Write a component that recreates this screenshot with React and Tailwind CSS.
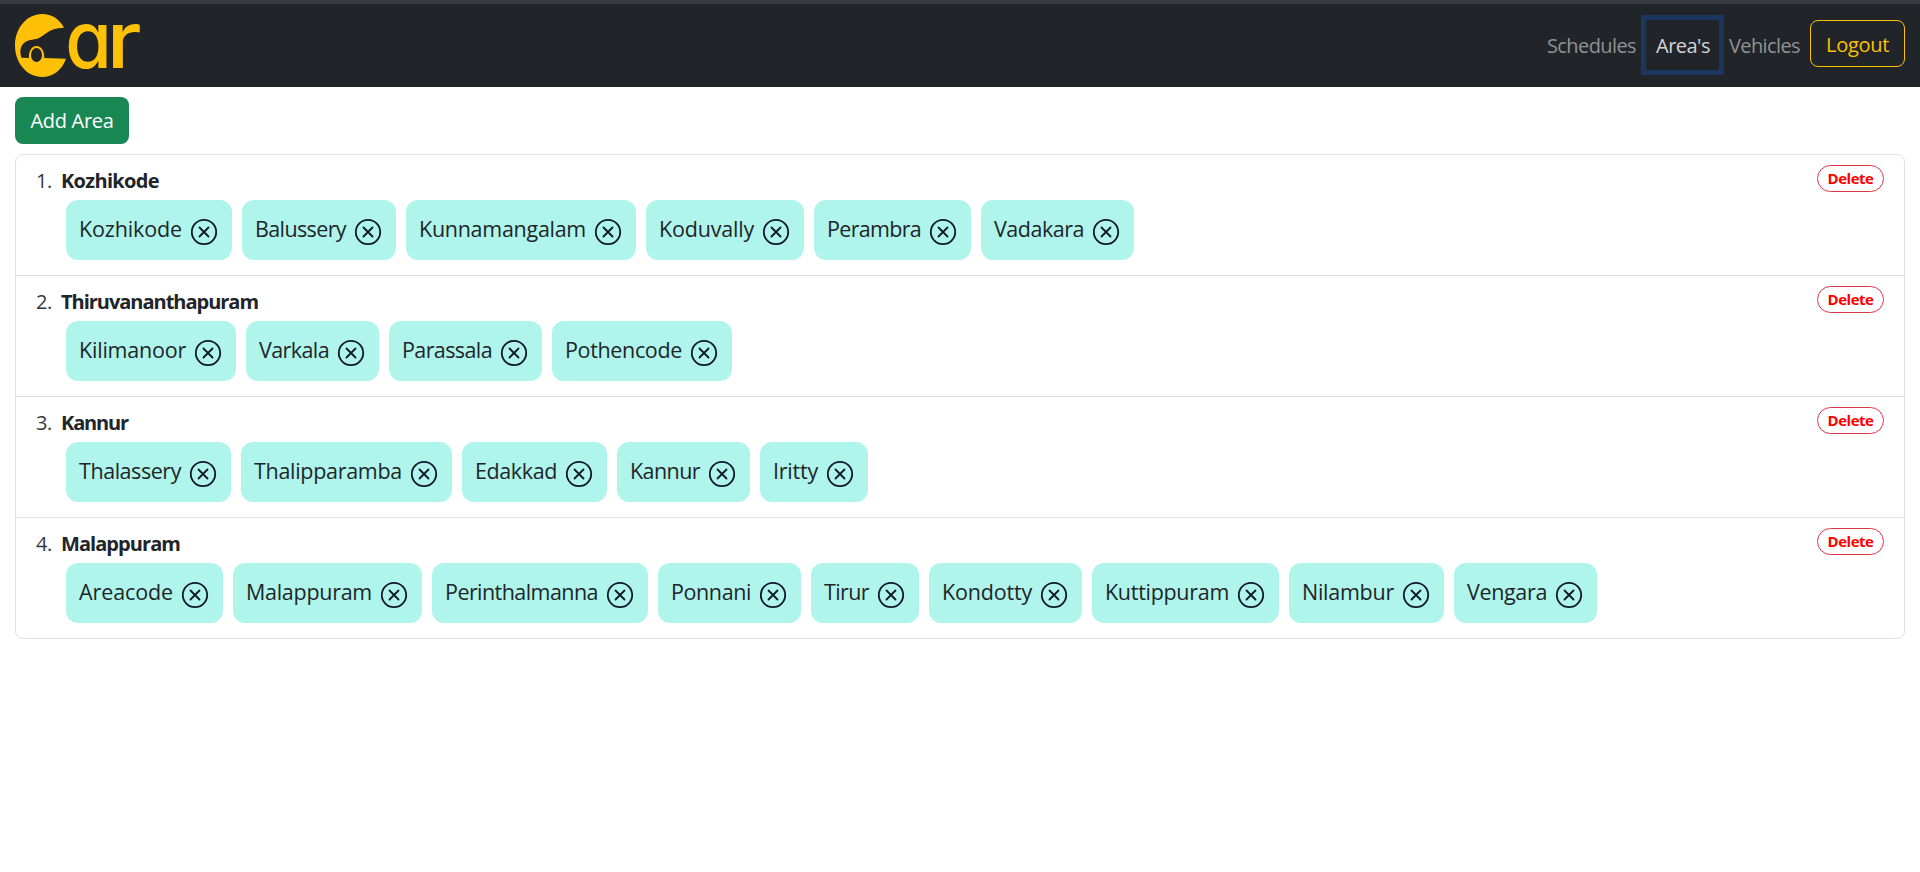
import { useLayoutEffect, useRef, useState } from "react";

const areas = [
  { name: "Kozhikode", width: 98, places: [["Kozhikode", 103], ["Balussery", 91], ["Kunnamangalam", 167], ["Koduvally", 95], ["Perambra", 94], ["Vadakara", 90]] },
  { name: "Thiruvananthapuram", width: 197, places: [["Kilimanoor", 107], ["Varkala", 70], ["Parassala", 90], ["Pothencode", 117]] },
  { name: "Kannur", width: 67, places: [["Thalassery", 102], ["Thalipparamba", 148], ["Edakkad", 82], ["Kannur", 70], ["Iritty", 45]] },
  { name: "Malappuram", width: 119, places: [["Areacode", 94], ["Malappuram", 126], ["Perinthalmanna", 153], ["Ponnani", 80], ["Tirur", 45], ["Kondotty", 90], ["Kuttippuram", 124], ["Nilambur", 92], ["Vengara", 80]] },
];

// Text whose letter spacing is adjusted so that it fills the given width.
function FitText({ text, width }) {
  const ref = useRef(null);
  const [spacing, setSpacing] = useState(0);
  useLayoutEffect(() => {
    const natural = ref.current.getBoundingClientRect().width;
    setSpacing((width - natural) / text.length);
  }, [text, width]);
  return (
    <span ref={ref} className="inline-block whitespace-nowrap" style={{ letterSpacing: `${spacing}px` }}>
      {text}
    </span>
  );
}

function Logo() {
  return (
    <svg className="h-[70px] w-[130px] overflow-visible" viewBox="13 11 130 70" fill="#ffc107" role="img" aria-label="Car">
      <path d="M64 27.7C59.5 19 51.500 14 42 14C27 14 15 28 15 45.500C15 63 27 77 42 77C53 77 62 70 66 58.700L44.300 58C44.500 51 41.500 46 36.500 46C31.500 46 28.700 51 28.900 58L21.500 57.800C19.500 52 20.300 46.500 23.500 43.500C27.500 39.500 33 40 38 38.500C43 36.500 47 31.500 53 29.500C57 28.300 60 28 64 27.700Z" />
      <ellipse cx="36.500" cy="55" rx="5.500" ry="7" fill="#212529" />
      <g className="font-['Inter',sans-serif] text-[79px] font-medium [font-feature-settings:'cv11']">
        <text transform="translate(65.300 68) scale(0.955 1)">a</text>
        <text transform="translate(106.500 68) scale(1.15 1)">r</text>
      </g>
    </svg>
  );
}

function CloseIcon() {
  return (
    <svg className="mt-[3px] size-7 shrink-0" viewBox="0 0 28 28" fill="none" stroke="#0f1729" strokeWidth="1.800" strokeLinecap="round">
      <circle cx="14" cy="14" r="12.200" />
      <path d="M9.500 9.500L18.500 18.500M18.500 9.500L9.500 18.500" />
    </svg>
  );
}

export default function App() {
  return (
    <div className="min-h-[872px] bg-white font-['Open_Sans',sans-serif] text-xl text-[#212529]">
      <header className="flex h-[87px] items-start border-t-4 border-[#373b44] bg-[#212529] pr-[15px] pl-[13px]">
        <a className="mt-[7px]"><Logo /></a>
        <nav className="ml-auto flex items-start text-[#909294]">
          <a className="mt-[27px] w-[94px] leading-[30px]"><FitText text="Schedules" width={89} /></a>
          <a className="mt-[11px] h-[60px] w-[83px] border-5 border-[#1c375f] pt-[11px] pl-2.5 leading-[30px] text-[#d3d3d4]"><FitText text="Area's" width={54} /></a>
          <a className="mt-[27px] ml-[5px] w-[81px] leading-[30px]"><FitText text="Vehicles" width={71} /></a>
          <button className="mt-4 h-[47px] w-[95px] rounded-lg border border-[#ffc107] pt-[3px] leading-[30px] text-[#ffc107]"><FitText text="Logout" width={63} /></button>
        </nav>
      </header>
      <main className="px-[15px] pt-2.5">
        <button className="block h-[47px] w-[114px] rounded-lg bg-[#198754] pt-px leading-[30px] text-white"><FitText text="Add Area" width={83} /></button>
        <ol className="mt-2.5 rounded-lg border border-[#dee2e6]">
          {areas.map((area, i) => (
            <li key={area.name} className="flex h-[121px] items-start border-b border-[#dee2e6] pt-2.5 pr-5 pl-5 last:h-[120px] last:border-b-0">
              <span className="w-[25px] pt-px leading-[30px] text-[#34383c]"><FitText text={`${i + 1}.`} width={16} /></span>
              <div className="grow">
                <div className="pt-px leading-[30px] font-bold"><FitText text={area.name} width={area.width} /></div>
                <div className="mt-1 ml-[5px] flex gap-2.5">
                  {area.places.map(([place, width]) => (
                    <div key={place} className="flex h-[60px] items-center gap-2 rounded-xl bg-[#aff5ec] pr-3.5 pl-[13px] text-[21.500px]">
                      <span className="pb-0.5 leading-[30px]"><FitText text={place} width={width} /></span>
                      <CloseIcon />
                    </div>
                  ))}
                </div>
              </div>
              <button className="h-[27px] w-[67px] rounded-full border border-[#dc3545] pb-0.5 text-[15px] leading-[22px] font-bold text-[#ff0000]"><FitText text="Delete" width={46} /></button>
            </li>
          ))}
        </ol>
      </main>
    </div>
  );
}
